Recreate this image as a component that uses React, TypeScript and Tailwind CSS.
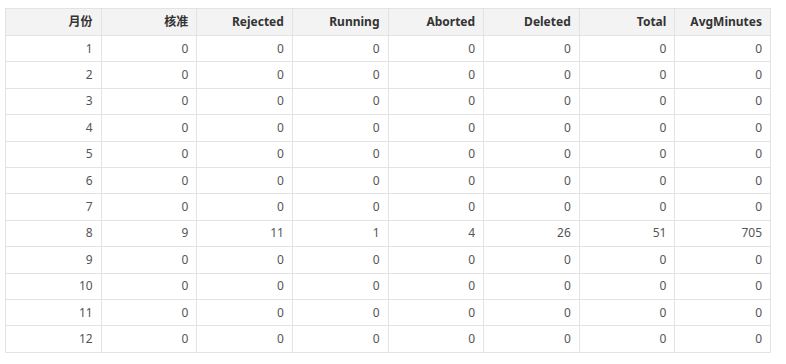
const COLUMNS = ["月份", "核准", "Rejected", "Running", "Aborted", "Deleted", "Total", "AvgMinutes"];

const ROWS: number[][] = Array.from({ length: 12 }, (_, i) =>
  i === 7 ? [8, 9, 11, 1, 4, 26, 51, 705] : [i + 1, 0, 0, 0, 0, 0, 0, 0]
);

export default function App() {
  return (
    <div className="w-[786px] h-[364px] bg-white pt-2 pl-[5px] font-['Noto_Sans','Noto_Sans_CJK_SC',sans-serif]">
      <table className="w-[766px] table-fixed border-collapse text-[12px]">
        <thead>
          <tr className="h-[27px] bg-[#f3f3f3]">
            {COLUMNS.map((col) => (
              <th
                key={col}
                className="border border-[#e3e3e3] pr-2 text-right font-bold text-[#333]"
              >
                {col}
              </th>
            ))}
          </tr>
        </thead>
        <tbody>
          {ROWS.map((row) => (
            <tr key={row[0]} className="h-[26.4px]">
              {row.map((value, idx) => (
                <td
                  key={idx}
                  className="border border-[#e3e3e3] pr-2 text-right text-[#555]"
                >
                  {value}
                </td>
              ))}
            </tr>
          ))}
        </tbody>
      </table>
    </div>
  );
}
